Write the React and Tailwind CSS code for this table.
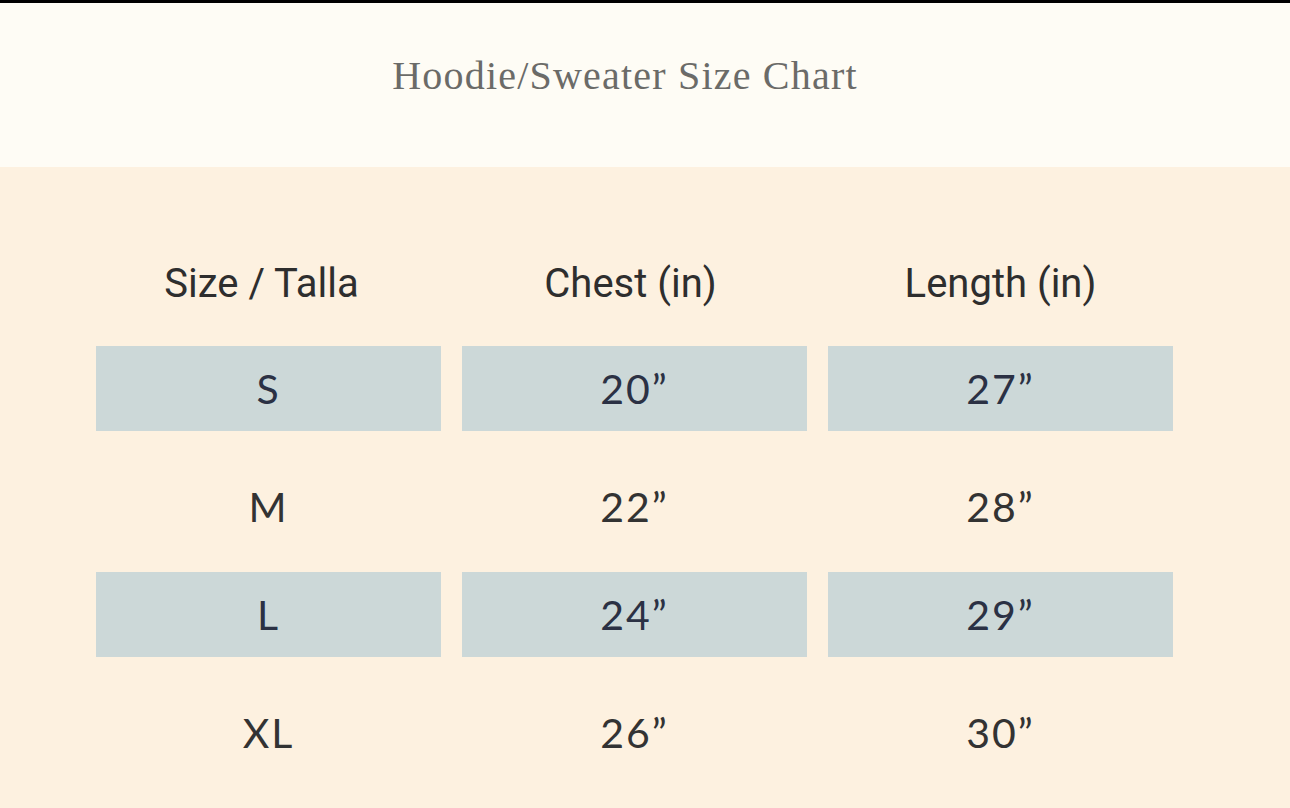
const rows = [
  { size: 'S', chest: '20”', length: '27”', shaded: true },
  { size: 'M', chest: '22”', length: '28”', shaded: false },
  { size: 'L', chest: '24”', length: '29”', shaded: true },
  { size: 'XL', chest: '26”', length: '30”', shaded: false },
];

function Cell({ children, shaded }) {
  return (
    <div
      className={
        shaded
          ? 'h-[85px] flex items-center justify-center bg-[#ccd8d8] text-[#2b3144]'
          : 'h-[85px] flex items-center justify-center pt-[10px] text-[#333333]'
      }
    >
      {children}
    </div>
  );
}

export default function App() {
  return (
    <div className="w-[1290px] h-[808px] overflow-hidden bg-[#fdf1e0]">
      <div className="h-[3px] bg-black" />

      {/* Title band */}
      <div className="h-[164px] bg-[#fefcf5] flex justify-center pt-[51px] pr-[40px]">
        <h1 className="font-['Liberation_Serif',serif] text-[40px] leading-[44px] tracking-[1.2px] text-[#6b6b68]">
          Hoodie/Sweater Size Chart
        </h1>
      </div>

      {/* Size table */}
      <div className="pl-[96px] pt-[74px]">
        <div className="grid grid-cols-[345px_345px_345px] gap-x-[21px] font-['Roboto',sans-serif] text-[40px] text-[#2e2e2e]">
          <div className="h-[85px] flex items-center justify-center pr-[14px]">Size / Talla</div>
          <div className="h-[85px] flex items-center justify-center pr-[8px]">Chest (in)</div>
          <div className="h-[85px] flex items-center justify-center">Length (in)</div>
        </div>

        <div className="mt-[20px] grid grid-cols-[345px_345px_345px] gap-x-[21px] gap-y-[28px] font-['Lato','Open_Sans',sans-serif] text-[41px] tracking-[2px]">
          {rows.map((r) => (
            <>
              <Cell key={r.size + 's'} shaded={r.shaded}>{r.size}</Cell>
              <Cell key={r.size + 'c'} shaded={r.shaded}>{r.chest}</Cell>
              <Cell key={r.size + 'l'} shaded={r.shaded}>{r.length}</Cell>
            </>
          ))}
        </div>
      </div>
    </div>
  );
}
